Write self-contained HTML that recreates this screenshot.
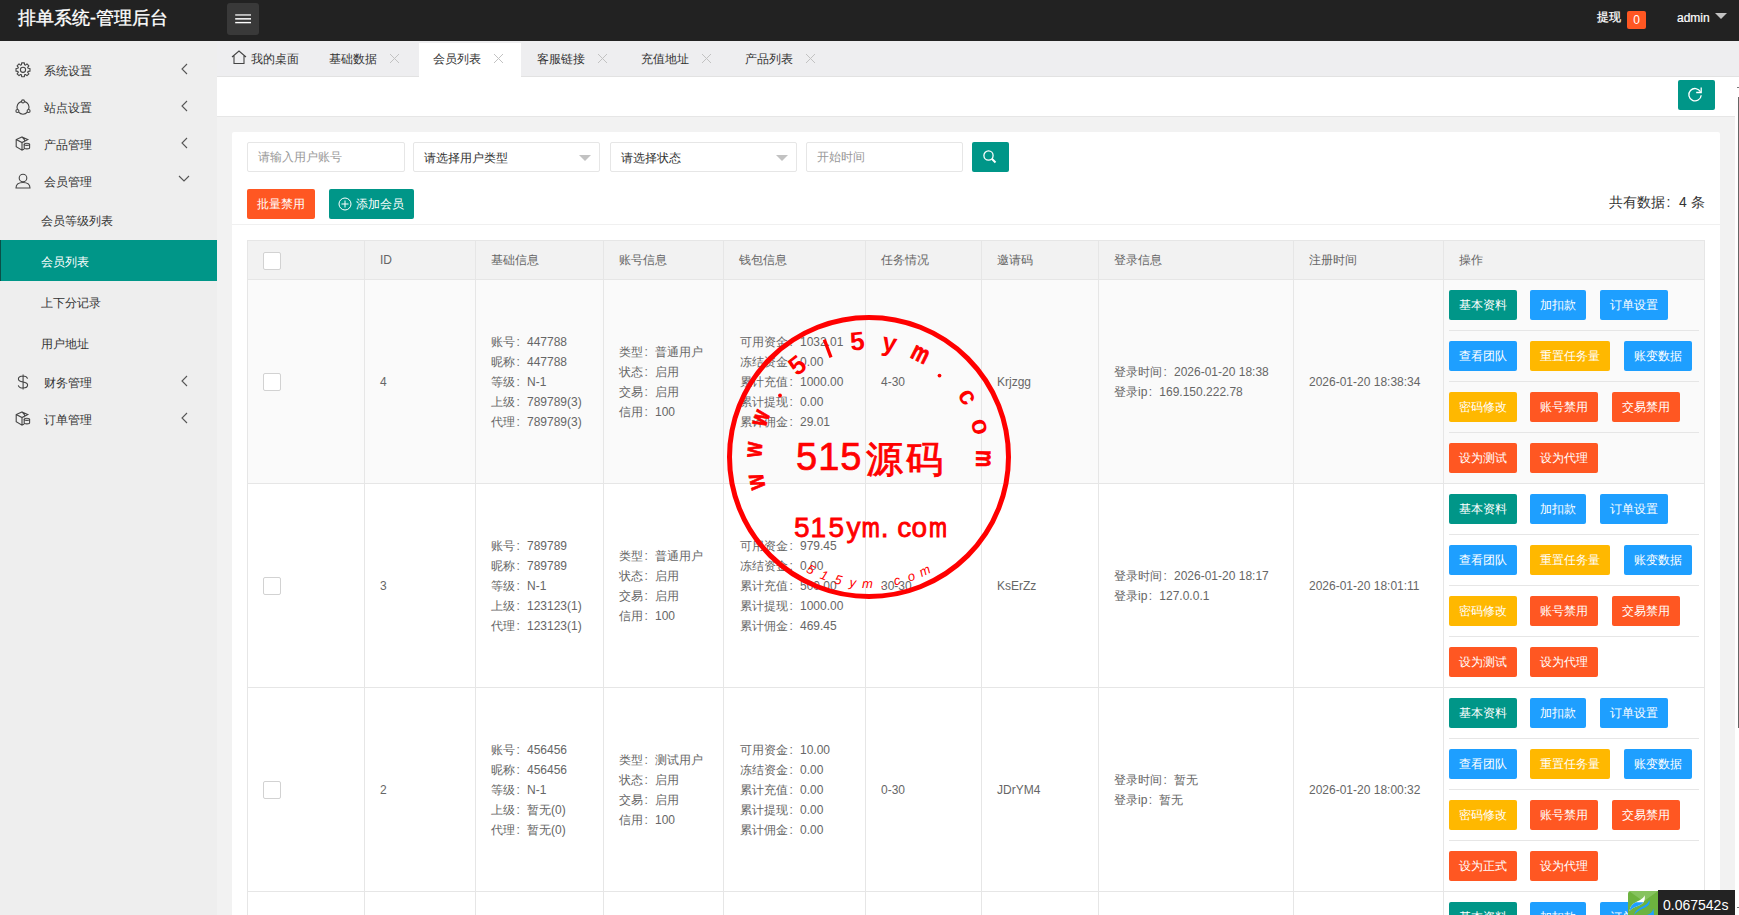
<!DOCTYPE html><html><head><meta charset="utf-8"><style>
i.c{font-style:normal;display:inline-block;width:12px;padding-left:1.5px}
*{box-sizing:border-box;margin:0;padding:0}
html,body{width:1739px;height:915px;overflow:hidden;background:#f2f2f2;font-family:"Liberation Sans",sans-serif;color:#666;font-size:12px}
div,span{position:absolute;white-space:nowrap}
#hdr{left:0;top:0;width:1739px;height:41px;background:#222}
#logo{left:18px;top:6px;font-size:18px;color:#fff;line-height:24px;-webkit-text-stroke:0.35px #fff}
#ham{left:227px;top:3px;width:32px;height:32px;background:#393939;border-radius:3px}
#side{left:0;top:41px;width:217px;height:874px;background:#eee}
.mt{left:44px;color:#333;font-size:12px;line-height:20px}
.st{left:41px;color:#333;font-size:12px;line-height:20px}
#on{left:0;top:240px;width:217px;height:41px;background:#009688;border-left:1px solid #0a4f48}
#tabs{left:217px;top:41px;width:1522px;height:36px;background:#eeeef0;border-bottom:1px solid #e2e2e2}
.tt{top:49px;color:#333;font-size:12px;line-height:20px}
#ontab{left:419px;top:43px;width:102px;height:34px;background:#fff}
#strip{left:217px;top:77px;width:1518px;height:40px;background:#fff;border-bottom:1px solid #e6e6e6}
#card{left:232px;top:132px;width:1488px;height:800px;background:#fff;border-radius:2px}
.inp{top:142px;height:30px;border:1px solid #e6e6e6;border-radius:2px;background:#fff;line-height:28px;padding-left:10px;color:#999;font-size:12px}
.sel{color:#333;line-height:30px}
.tri{top:12px;width:0;height:0;border-left:6px solid transparent;border-right:6px solid transparent;border-top:6px solid #c2c2c2}
.btn{height:30px;line-height:30px;color:#fff;font-size:12px;text-align:center;border-radius:2px}
.g{background:#009688}.b{background:#1E9FFF}.y{background:#FFB800}.r{background:#FF5722}
#total{left:1609px;top:192px;font-size:14px;color:#333;line-height:20px}
#sep1{left:232px;top:224px;width:1488px;height:1px;background:#f0f0f0}
.vl{width:1px;background:#e6e6e6}
.hl{height:1px;background:#e6e6e6}
.th{top:250px;color:#666;font-size:12px;line-height:20px}
.cb{width:18px;height:18px;border:1px solid #d2d2d2;border-radius:2px;background:#fff}
.cell{color:#666;font-size:12px;line-height:20px}
.asep{height:1px;background:#e6e6e6;left:1449px;width:250px}
</style></head><body>
<div id="hdr"></div><div id="logo">排单系统-管理后台</div>
<div id="ham"><svg width="32" height="32" viewBox="0 0 32 32" style="position:absolute;left:0;top:0"><g fill="#fff"><rect x="8.2" y="11.2" width="15.8" height="1.5" fill="#ddd"/><rect x="8.2" y="15.1" width="15.8" height="1.5"/><rect x="8.2" y="18.9" width="15.8" height="1.4"/></g></svg></div>
<div style="left:1597px;top:8px;color:#fff;font-size:12px;line-height:18px;-webkit-text-stroke:0.25px #fff">提现</div>
<div style="left:1627px;top:11px;width:19px;height:18px;background:#FF5722;border-radius:2px;color:#fff;font-size:12px;line-height:18px;text-align:center">0</div>
<div style="left:1677px;top:9px;color:#fff;font-size:12px;line-height:18px;-webkit-text-stroke:0.2px #fff">admin</div>
<div style="left:1715px;top:13px;width:0;height:0;border-left:6px solid transparent;border-right:6px solid transparent;border-top:6px solid #c2c2c2"></div>
<div id="side"></div>
<div id="on"></div>
<div class="mt" style="top:61px">系统设置</div>
<div class="mt" style="top:98px">站点设置</div>
<div class="mt" style="top:135px">产品管理</div>
<div class="mt" style="top:172px">会员管理</div>
<div class="mt" style="top:373px">财务管理</div>
<div class="mt" style="top:410px">订单管理</div>
<div class="st" style="top:211px;color:#333">会员等级列表</div>
<div class="st" style="top:252px;color:#fff">会员列表</div>
<div class="st" style="top:293px;color:#333">上下分记录</div>
<div class="st" style="top:334px;color:#333">用户地址</div>
<svg style="position:absolute;left:180px;top:63px" width="9" height="12" viewBox="0 0 9 12"><path d="M7 1 L2 6 L7 11" fill="none" stroke="#555" stroke-width="1.1"/></svg>
<svg style="position:absolute;left:180px;top:100px" width="9" height="12" viewBox="0 0 9 12"><path d="M7 1 L2 6 L7 11" fill="none" stroke="#555" stroke-width="1.1"/></svg>
<svg style="position:absolute;left:180px;top:137px" width="9" height="12" viewBox="0 0 9 12"><path d="M7 1 L2 6 L7 11" fill="none" stroke="#555" stroke-width="1.1"/></svg>
<svg style="position:absolute;left:180px;top:375px" width="9" height="12" viewBox="0 0 9 12"><path d="M7 1 L2 6 L7 11" fill="none" stroke="#555" stroke-width="1.1"/></svg>
<svg style="position:absolute;left:180px;top:412px" width="9" height="12" viewBox="0 0 9 12"><path d="M7 1 L2 6 L7 11" fill="none" stroke="#555" stroke-width="1.1"/></svg>
<svg style="position:absolute;left:178px;top:174px" width="12" height="9" viewBox="0 0 12 9"><path d="M1 2 L6 7 L11 2" fill="none" stroke="#555" stroke-width="1.1"/></svg>
<svg style="position:absolute;left:15px;top:62px" width="16" height="16" viewBox="0 0 16 16"><path d="M6.45 2.73 L6.65 0.83 L9.35 0.83 L9.55 2.73 L10.49 3.12 L11.97 1.91 L13.89 3.83 L12.68 5.31 L13.07 6.25 L14.97 6.45 L14.97 9.15 L13.07 9.35 L12.68 10.29 L13.89 11.77 L11.97 13.69 L10.49 12.48 L9.55 12.87 L9.35 14.77 L6.65 14.77 L6.45 12.87 L5.51 12.48 L4.03 13.69 L2.11 11.77 L3.32 10.29 L2.93 9.35 L1.03 9.15 L1.03 6.45 L2.93 6.25 L3.32 5.31 L2.11 3.83 L4.03 1.91 L5.51 3.12Z" fill="none" stroke="#444" stroke-width="1.1" stroke-linejoin="round"/><circle cx="8" cy="7.8" r="2.6" fill="none" stroke="#444" stroke-width="1.1"/></svg>
<svg style="position:absolute;left:15px;top:99px" width="16" height="16" viewBox="0 0 16 16"><path d="M6.2 2.6A5.8 5.8 0 0 0 2.4 10.2M9.8 2.6A5.8 5.8 0 0 1 13.6 10.2M3.6 13.2A5.8 5.8 0 0 0 12.4 13.2" fill="none" stroke="#444" stroke-width="1.1"/><circle cx="8" cy="2.4" r="1.5" fill="none" stroke="#444" stroke-width="1.1"/><circle cx="2.4" cy="12" r="1.5" fill="none" stroke="#444" stroke-width="1.1"/><circle cx="13.6" cy="12" r="1.5" fill="none" stroke="#444" stroke-width="1.1"/></svg>
<svg style="position:absolute;left:15px;top:136px" width="16" height="16" viewBox="0 0 16 16"><path d="M9.6 6.2 V4 L7 1 L1.2 3.6 V10.8 L7 14.2 L9.2 13 M1.2 3.6 L7 6.6 L12.8 3.6 L7 1 M7 6.6 V14.2" fill="none" stroke="#444" stroke-width="1.1"/><ellipse cx="11.9" cy="8.3" rx="2.7" ry="1.1" fill="none" stroke="#444" stroke-width="1.1"/><path d="M9.2 8.3 V11.8 A2.7 1.1 0 0 0 14.6 11.8 V8.3" fill="none" stroke="#444" stroke-width="1.1"/></svg>
<svg style="position:absolute;left:15px;top:411px" width="16" height="16" viewBox="0 0 16 16"><path d="M9.6 6.2 V4 L7 1 L1.2 3.6 V10.8 L7 14.2 L9.2 13 M1.2 3.6 L7 6.6 L12.8 3.6 L7 1 M7 6.6 V14.2" fill="none" stroke="#444" stroke-width="1.1"/><ellipse cx="11.9" cy="8.3" rx="2.7" ry="1.1" fill="none" stroke="#444" stroke-width="1.1"/><path d="M9.2 8.3 V11.8 A2.7 1.1 0 0 0 14.6 11.8 V8.3" fill="none" stroke="#444" stroke-width="1.1"/></svg>
<svg style="position:absolute;left:15px;top:173px" width="16" height="16" viewBox="0 0 16 16"><circle cx="8" cy="5" r="3.8" fill="none" stroke="#444" stroke-width="1.1"/><path d="M1 15 C1 10.5 4 9.5 8 9.5 C12 9.5 15 10.5 15 15 Z" fill="none" stroke="#444" stroke-width="1.1"/></svg>
<svg style="position:absolute;left:16px;top:374px" width="14" height="16" viewBox="0 0 14 16"><path d="M11.6 4.6 C11 2.9 9.3 2 7 2 C4.4 2 2.4 3.3 2.4 5.1 C2.4 7 4.5 7.6 7 8 C9.5 8.4 11.6 9 11.6 11 C11.6 12.8 9.6 14 7 14 C4.4 14 2.7 13 2.3 11.3 M7.1 0.5 V15.5" fill="none" stroke="#444" stroke-width="1.1"/></svg>
<div id="tabs"></div><div id="ontab"></div>
<svg style="position:absolute;left:231px;top:50px" width="16" height="15" viewBox="0 0 16 15"><path d="M1 7 L8 1 L15 7 M3 5.5 V13.5 H13 V5.5" fill="none" stroke="#444" stroke-width="1.1"/></svg>
<div class="tt" style="left:251px">我的桌面</div>
<div class="tt" style="left:329px">基础数据</div>
<svg style="position:absolute;left:389px;top:53px" width="11" height="11" viewBox="0 0 11 11"><path d="M1 1 L10 10 M10 1 L1 10" stroke="#c2c2c2" stroke-width="1"/></svg>
<div class="tt" style="left:433px">会员列表</div>
<svg style="position:absolute;left:493px;top:53px" width="11" height="11" viewBox="0 0 11 11"><path d="M1 1 L10 10 M10 1 L1 10" stroke="#c2c2c2" stroke-width="1"/></svg>
<div class="tt" style="left:537px">客服链接</div>
<svg style="position:absolute;left:597px;top:53px" width="11" height="11" viewBox="0 0 11 11"><path d="M1 1 L10 10 M10 1 L1 10" stroke="#c2c2c2" stroke-width="1"/></svg>
<div class="tt" style="left:641px">充值地址</div>
<svg style="position:absolute;left:701px;top:53px" width="11" height="11" viewBox="0 0 11 11"><path d="M1 1 L10 10 M10 1 L1 10" stroke="#c2c2c2" stroke-width="1"/></svg>
<div class="tt" style="left:745px">产品列表</div>
<svg style="position:absolute;left:805px;top:53px" width="11" height="11" viewBox="0 0 11 11"><path d="M1 1 L10 10 M10 1 L1 10" stroke="#c2c2c2" stroke-width="1"/></svg>
<div id="strip"></div>
<div class="btn g" style="left:1678px;top:80px;width:37px"></div>
<svg style="position:absolute;left:1686px;top:85px" width="18" height="18" viewBox="0 0 18 18"><path d="M14.5 6.8 A6.2 6.2 0 1 0 15.2 10.2" fill="none" stroke="#fff" stroke-width="1.3"/><path d="M15.2 2.4 V7.5 H10.2" fill="none" stroke="#fff" stroke-width="1.3"/></svg>
<div style="left:1735px;top:77px;width:4px;height:838px;background:#fff"></div><div style="left:1738px;top:97px;width:1px;height:631px;background:#666"></div><div style="left:1737px;top:907px;width:2px;height:1px;background:#777"></div><div style="left:1737px;top:87px;width:2px;height:1px;background:#777"></div>
<div id="card"></div><div id="sep1"></div>
<div class="inp" style="left:247px;width:158px">请输入用户账号</div>
<div class="inp sel" style="left:413px;width:187px">请选择用户类型<span class="tri" style="left:165px"></span></div>
<div class="inp sel" style="left:610px;width:187px">请选择状态<span class="tri" style="left:165px"></span></div>
<div class="inp" style="left:806px;width:157px">开始时间</div>
<div class="btn g" style="left:972px;top:142px;width:37px"></div>
<svg style="position:absolute;left:980px;top:148px" width="18" height="18" viewBox="0 0 18 18"><circle cx="8.5" cy="7.5" r="4.6" fill="none" stroke="#fff" stroke-width="1.3"/><path d="M11.8 10.8 L15.5 14.5" stroke="#fff" stroke-width="2"/></svg>
<div class="btn r" style="left:247px;top:189px;width:68px">批量禁用</div>
<div class="btn g" style="left:329px;top:189px;width:85px;text-align:left;padding-left:27px">添加会员</div>
<svg style="position:absolute;left:338px;top:197px" width="14" height="14" viewBox="0 0 14 14"><circle cx="7" cy="7" r="6" fill="none" stroke="#fff" stroke-width="1"/><path d="M7 3.5 V10.5 M3.5 7 H10.5" stroke="#fff" stroke-width="1"/></svg>
<div id="total">共有数据<i class="c" style="width:14px">:</i>4 条</div>
<div style="left:247px;top:240px;width:1458px;height:40px;background:#f2f2f2"></div>
<div style="left:247px;top:280px;width:1458px;height:203px;background:#fafafa"></div>
<div class="vl" style="left:247px;top:240px;height:675px"></div>
<div class="vl" style="left:364px;top:240px;height:675px"></div>
<div class="vl" style="left:475px;top:240px;height:675px"></div>
<div class="vl" style="left:603px;top:240px;height:675px"></div>
<div class="vl" style="left:723px;top:240px;height:675px"></div>
<div class="vl" style="left:865px;top:240px;height:675px"></div>
<div class="vl" style="left:981px;top:240px;height:675px"></div>
<div class="vl" style="left:1098px;top:240px;height:675px"></div>
<div class="vl" style="left:1293px;top:240px;height:675px"></div>
<div class="vl" style="left:1443px;top:240px;height:675px"></div>
<div class="vl" style="left:1704px;top:240px;height:675px"></div>
<div class="hl" style="left:247px;top:240px;width:1458px"></div>
<div class="hl" style="left:247px;top:279px;width:1458px"></div>
<div class="hl" style="left:247px;top:483px;width:1458px"></div>
<div class="hl" style="left:247px;top:687px;width:1458px"></div>
<div class="hl" style="left:247px;top:891px;width:1458px"></div>
<div class="th" style="left:380px">ID</div>
<div class="th" style="left:491px">基础信息</div>
<div class="th" style="left:619px">账号信息</div>
<div class="th" style="left:739px">钱包信息</div>
<div class="th" style="left:881px">任务情况</div>
<div class="th" style="left:997px">邀请码</div>
<div class="th" style="left:1114px">登录信息</div>
<div class="th" style="left:1309px">注册时间</div>
<div class="th" style="left:1459px">操作</div>
<div class="cb" style="left:263px;top:252px"></div>
<div class="cb" style="left:263px;top:373px"></div>
<div class="cell" style="left:380px;top:371.5px">4</div>
<div class="cell" style="left:491px;top:331.5px">账号<i class="c">:</i>447788</div>
<div class="cell" style="left:491px;top:351.5px">昵称<i class="c">:</i>447788</div>
<div class="cell" style="left:491px;top:371.5px">等级<i class="c">:</i>N-1</div>
<div class="cell" style="left:491px;top:391.5px">上级<i class="c">:</i>789789(3)</div>
<div class="cell" style="left:491px;top:411.5px">代理<i class="c">:</i>789789(3)</div>
<div class="cell" style="left:619px;top:341.5px">类型<i class="c">:</i>普通用户</div>
<div class="cell" style="left:619px;top:361.5px">状态<i class="c">:</i>启用</div>
<div class="cell" style="left:619px;top:381.5px">交易<i class="c">:</i>启用</div>
<div class="cell" style="left:619px;top:401.5px">信用<i class="c">:</i>100</div>
<div class="cell" style="left:740px;top:331.5px">可用资金<i class="c">:</i>1032.01</div>
<div class="cell" style="left:740px;top:351.5px">冻结资金<i class="c">:</i>0.00</div>
<div class="cell" style="left:740px;top:371.5px">累计充值<i class="c">:</i>1000.00</div>
<div class="cell" style="left:740px;top:391.5px">累计提现<i class="c">:</i>0.00</div>
<div class="cell" style="left:740px;top:411.5px">累计佣金<i class="c">:</i>29.01</div>
<div class="cell" style="left:881px;top:371.5px">4-30</div>
<div class="cell" style="left:997px;top:371.5px">Krjzgg</div>
<div class="cell" style="left:1114px;top:361.5px">登录时间<i class="c">:</i>2026-01-20 18:38</div>
<div class="cell" style="left:1114px;top:381.5px">登录ip<i class="c">:</i>169.150.222.78</div>
<div class="cell" style="left:1309px;top:371.5px">2026-01-20 18:38:34</div>
<div class="btn g" style="left:1449px;top:290px;width:68px">基本资料</div>
<div class="btn b" style="left:1530px;top:290px;width:56px">加扣款</div>
<div class="btn b" style="left:1600px;top:290px;width:68px">订单设置</div>
<div class="asep" style="top:330px"></div>
<div class="btn b" style="left:1449px;top:341px;width:68px">查看团队</div>
<div class="btn y" style="left:1530px;top:341px;width:80px">重置任务量</div>
<div class="btn b" style="left:1624px;top:341px;width:68px">账变数据</div>
<div class="asep" style="top:381px"></div>
<div class="btn y" style="left:1449px;top:392px;width:68px">密码修改</div>
<div class="btn r" style="left:1530px;top:392px;width:68px">账号禁用</div>
<div class="btn r" style="left:1612px;top:392px;width:68px">交易禁用</div>
<div class="asep" style="top:432px"></div>
<div class="btn r" style="left:1449px;top:443px;width:68px">设为测试</div>
<div class="btn r" style="left:1530px;top:443px;width:68px">设为代理</div>
<div class="cb" style="left:263px;top:577px"></div>
<div class="cell" style="left:380px;top:575.5px">3</div>
<div class="cell" style="left:491px;top:535.5px">账号<i class="c">:</i>789789</div>
<div class="cell" style="left:491px;top:555.5px">昵称<i class="c">:</i>789789</div>
<div class="cell" style="left:491px;top:575.5px">等级<i class="c">:</i>N-1</div>
<div class="cell" style="left:491px;top:595.5px">上级<i class="c">:</i>123123(1)</div>
<div class="cell" style="left:491px;top:615.5px">代理<i class="c">:</i>123123(1)</div>
<div class="cell" style="left:619px;top:545.5px">类型<i class="c">:</i>普通用户</div>
<div class="cell" style="left:619px;top:565.5px">状态<i class="c">:</i>启用</div>
<div class="cell" style="left:619px;top:585.5px">交易<i class="c">:</i>启用</div>
<div class="cell" style="left:619px;top:605.5px">信用<i class="c">:</i>100</div>
<div class="cell" style="left:740px;top:535.5px">可用资金<i class="c">:</i>979.45</div>
<div class="cell" style="left:740px;top:555.5px">冻结资金<i class="c">:</i>0.00</div>
<div class="cell" style="left:740px;top:575.5px">累计充值<i class="c">:</i>500.00</div>
<div class="cell" style="left:740px;top:595.5px">累计提现<i class="c">:</i>1000.00</div>
<div class="cell" style="left:740px;top:615.5px">累计佣金<i class="c">:</i>469.45</div>
<div class="cell" style="left:881px;top:575.5px">30-30</div>
<div class="cell" style="left:997px;top:575.5px">KsErZz</div>
<div class="cell" style="left:1114px;top:565.5px">登录时间<i class="c">:</i>2026-01-20 18:17</div>
<div class="cell" style="left:1114px;top:585.5px">登录ip<i class="c">:</i>127.0.0.1</div>
<div class="cell" style="left:1309px;top:575.5px">2026-01-20 18:01:11</div>
<div class="btn g" style="left:1449px;top:494px;width:68px">基本资料</div>
<div class="btn b" style="left:1530px;top:494px;width:56px">加扣款</div>
<div class="btn b" style="left:1600px;top:494px;width:68px">订单设置</div>
<div class="asep" style="top:534px"></div>
<div class="btn b" style="left:1449px;top:545px;width:68px">查看团队</div>
<div class="btn y" style="left:1530px;top:545px;width:80px">重置任务量</div>
<div class="btn b" style="left:1624px;top:545px;width:68px">账变数据</div>
<div class="asep" style="top:585px"></div>
<div class="btn y" style="left:1449px;top:596px;width:68px">密码修改</div>
<div class="btn r" style="left:1530px;top:596px;width:68px">账号禁用</div>
<div class="btn r" style="left:1612px;top:596px;width:68px">交易禁用</div>
<div class="asep" style="top:636px"></div>
<div class="btn r" style="left:1449px;top:647px;width:68px">设为测试</div>
<div class="btn r" style="left:1530px;top:647px;width:68px">设为代理</div>
<div class="cb" style="left:263px;top:781px"></div>
<div class="cell" style="left:380px;top:779.5px">2</div>
<div class="cell" style="left:491px;top:739.5px">账号<i class="c">:</i>456456</div>
<div class="cell" style="left:491px;top:759.5px">昵称<i class="c">:</i>456456</div>
<div class="cell" style="left:491px;top:779.5px">等级<i class="c">:</i>N-1</div>
<div class="cell" style="left:491px;top:799.5px">上级<i class="c">:</i>暂无(0)</div>
<div class="cell" style="left:491px;top:819.5px">代理<i class="c">:</i>暂无(0)</div>
<div class="cell" style="left:619px;top:749.5px">类型<i class="c">:</i>测试用户</div>
<div class="cell" style="left:619px;top:769.5px">状态<i class="c">:</i>启用</div>
<div class="cell" style="left:619px;top:789.5px">交易<i class="c">:</i>启用</div>
<div class="cell" style="left:619px;top:809.5px">信用<i class="c">:</i>100</div>
<div class="cell" style="left:740px;top:739.5px">可用资金<i class="c">:</i>10.00</div>
<div class="cell" style="left:740px;top:759.5px">冻结资金<i class="c">:</i>0.00</div>
<div class="cell" style="left:740px;top:779.5px">累计充值<i class="c">:</i>0.00</div>
<div class="cell" style="left:740px;top:799.5px">累计提现<i class="c">:</i>0.00</div>
<div class="cell" style="left:740px;top:819.5px">累计佣金<i class="c">:</i>0.00</div>
<div class="cell" style="left:881px;top:779.5px">0-30</div>
<div class="cell" style="left:997px;top:779.5px">JDrYM4</div>
<div class="cell" style="left:1114px;top:769.5px">登录时间<i class="c">:</i>暂无</div>
<div class="cell" style="left:1114px;top:789.5px">登录ip<i class="c">:</i>暂无</div>
<div class="cell" style="left:1309px;top:779.5px">2026-01-20 18:00:32</div>
<div class="btn g" style="left:1449px;top:698px;width:68px">基本资料</div>
<div class="btn b" style="left:1530px;top:698px;width:56px">加扣款</div>
<div class="btn b" style="left:1600px;top:698px;width:68px">订单设置</div>
<div class="asep" style="top:738px"></div>
<div class="btn b" style="left:1449px;top:749px;width:68px">查看团队</div>
<div class="btn y" style="left:1530px;top:749px;width:80px">重置任务量</div>
<div class="btn b" style="left:1624px;top:749px;width:68px">账变数据</div>
<div class="asep" style="top:789px"></div>
<div class="btn y" style="left:1449px;top:800px;width:68px">密码修改</div>
<div class="btn r" style="left:1530px;top:800px;width:68px">账号禁用</div>
<div class="btn r" style="left:1612px;top:800px;width:68px">交易禁用</div>
<div class="asep" style="top:840px"></div>
<div class="btn r" style="left:1449px;top:851px;width:68px">设为正式</div>
<div class="btn r" style="left:1530px;top:851px;width:68px">设为代理</div>
<div class="btn g" style="left:1449px;top:902px;width:68px">基本资料</div>
<div class="btn b" style="left:1530px;top:902px;width:56px">加扣款</div>
<div class="btn b" style="left:1600px;top:902px;width:68px">订单设置</div>
<div class="asep" style="top:942px"></div>
<div class="btn b" style="left:1449px;top:953px;width:68px">查看团队</div>
<div class="btn y" style="left:1530px;top:953px;width:80px">重置任务量</div>
<div class="btn b" style="left:1624px;top:953px;width:68px">账变数据</div>
<div class="asep" style="top:993px"></div>
<div class="btn y" style="left:1449px;top:1004px;width:68px">密码修改</div>
<div class="btn r" style="left:1530px;top:1004px;width:68px">账号禁用</div>
<div class="btn r" style="left:1612px;top:1004px;width:68px">交易禁用</div>
<div class="asep" style="top:1044px"></div>
<div class="btn r" style="left:1449px;top:1055px;width:68px">设为测试</div>
<div class="btn r" style="left:1530px;top:1055px;width:68px">设为代理</div>
<svg style="position:absolute;left:0;top:0" width="1739" height="915" viewBox="0 0 1739 915"><g fill="#f00" font-family="Liberation Sans, sans-serif"><circle cx="869" cy="457" r="139.5" fill="none" stroke="#f00" stroke-width="5"/><text x="0" y="0" transform="translate(764.01,480.08) rotate(257.60) scale(0.74,1)" text-anchor="middle" font-size="26" font-weight="bold" stroke="#f00" stroke-width="0.9">w</text><text x="0" y="0" transform="translate(761.72,450.06) rotate(273.70) scale(0.74,1)" text-anchor="middle" font-size="26" font-weight="bold" stroke="#f00" stroke-width="0.9">w</text><text x="0" y="0" transform="translate(767.86,420.59) rotate(289.80) scale(0.74,1)" text-anchor="middle" font-size="26" font-weight="bold" stroke="#f00" stroke-width="0.9">w</text><text x="0" y="0" transform="translate(802.82,372.29) rotate(322.00)" text-anchor="middle" font-size="26" font-weight="bold" stroke="#f00" stroke-width="0">5</text><path d="M824.3 339.6 L831 357.4" stroke="#f00" stroke-width="3.3"/><text x="0" y="0" transform="translate(858.14,350.05) rotate(354.20)" text-anchor="middle" font-size="26" font-weight="bold" stroke="#f00" stroke-width="0">5</text><text x="0" y="0" transform="translate(888.22,351.23) rotate(370.30)" text-anchor="middle" font-size="26" font-weight="bold" stroke="#f00" stroke-width="0">y</text><text x="0" y="0" transform="translate(916.80,360.71) rotate(386.40) scale(0.74,1)" text-anchor="middle" font-size="26" font-weight="bold" stroke="#f00" stroke-width="0.9">m</text><text x="0" y="0" transform="translate(960.76,400.99) rotate(418.60)" text-anchor="middle" font-size="26" font-weight="bold" stroke="#f00" stroke-width="0">c</text><text x="0" y="0" transform="translate(972.69,428.63) rotate(434.70)" text-anchor="middle" font-size="26" font-weight="bold" stroke="#f00" stroke-width="0">o</text><text x="0" y="0" transform="translate(976.49,458.50) rotate(450.80) scale(0.74,1)" text-anchor="middle" font-size="26" font-weight="bold" stroke="#f00" stroke-width="0.9">m</text><circle cx="780" cy="395.5" r="1.9"/><circle cx="939.5" cy="375.6" r="1.9"/><text x="796" y="470" font-size="38" letter-spacing="1" stroke="#f00" stroke-width="0.7">515</text><text x="866" y="472" font-size="37" letter-spacing="3" stroke="#f00" stroke-width="0.9">源码</text><text x="0" y="0" transform="translate(801.9,536.7)" text-anchor="middle" font-size="28" stroke="#f00" stroke-width="0.8">5</text><text x="0" y="0" transform="translate(818.3,536.7)" text-anchor="middle" font-size="28" stroke="#f00" stroke-width="0.8">1</text><text x="0" y="0" transform="translate(836.4,536.7)" text-anchor="middle" font-size="28" stroke="#f00" stroke-width="0.8">5</text><text x="0" y="0" transform="translate(853.5,536.7)" text-anchor="middle" font-size="28" stroke="#f00" stroke-width="0.8">y</text><text x="0" y="0" transform="translate(870.8,536.7) scale(0.77,1)" text-anchor="middle" font-size="28" stroke="#f00" stroke-width="1.2">m</text><text x="0" y="0" transform="translate(884.6,536.7)" text-anchor="middle" font-size="28" stroke="#f00" stroke-width="0.8">.</text><text x="0" y="0" transform="translate(904.2,536.7)" text-anchor="middle" font-size="28" stroke="#f00" stroke-width="0.8">c</text><text x="0" y="0" transform="translate(919.2,536.7)" text-anchor="middle" font-size="28" stroke="#f00" stroke-width="0.8">o</text><text x="0" y="0" transform="translate(937.9,536.7) scale(0.77,1)" text-anchor="middle" font-size="28" stroke="#f00" stroke-width="1.2">m</text><text x="0" y="0" transform="translate(808.71,573.30) rotate(27.40)" text-anchor="middle" font-size="13" font-style="italic">5</text><text x="0" y="0" transform="translate(822.67,579.54) rotate(20.71)" text-anchor="middle" font-size="13" font-style="italic">1</text><text x="0" y="0" transform="translate(837.26,584.10) rotate(14.02)" text-anchor="middle" font-size="13" font-style="italic">5</text><text x="0" y="0" transform="translate(852.29,586.93) rotate(7.33)" text-anchor="middle" font-size="13" font-style="italic">y</text><text x="0" y="0" transform="translate(867.54,587.99) rotate(0.64)" text-anchor="middle" font-size="13" font-style="italic">m</text><text x="0" y="0" transform="translate(882.81,587.27) rotate(-6.05)" text-anchor="middle" font-size="13" font-style="italic">.</text><text x="0" y="0" transform="translate(897.89,584.77) rotate(-12.74)" text-anchor="middle" font-size="13" font-style="italic">c</text><text x="0" y="0" transform="translate(912.58,580.54) rotate(-19.43)" text-anchor="middle" font-size="13" font-style="italic">o</text><text x="0" y="0" transform="translate(926.67,574.62) rotate(-26.12)" text-anchor="middle" font-size="13" font-style="italic">m</text></g></svg>
<svg style="position:absolute;left:1628px;top:891px" width="30" height="24" viewBox="0 0 30 24">
<defs><clipPath id="tp"><path d="M3 0 H30 V24 H0 V3 A3 3 0 0 1 3 0Z"/></clipPath></defs>
<g clip-path="url(#tp)">
<rect x="0" y="0" width="30" height="24" fill="#6db33f"/>
<path d="M1 0 H30 L15.5 10.5 Z" fill="#86c35f"/>
<path d="M16.5 4.2 C15.5 7.5 12 9 9 10.5 C4.5 12.8 2 15.5 1.5 20 C5 16 9.5 15.5 13 13.5 C16.5 11.5 17.5 8 16.5 4.2Z" fill="#fff"/>
<path d="M16.5 4.2 C15.5 7.5 12 9 9 10.5 C4.5 12.8 2 15.5 1.5 20 C5 16 9.5 15.5 13 13.5 C16.5 11.5 17.5 8 16.5 4.2Z" fill="#1E9FFF" clip-path="inset(7px 0 0 0)"/>
<path d="M6 24 C9 20 13 18.5 17 16.5 C21 14.5 22.5 12 21.2 9 C20.5 12 18 13.8 14.5 15.5 C10 17.7 7 20 6 24Z" fill="#1E9FFF"/>
<path d="M25.5 17.5 C25 20 23 22.5 19 24 H26Z" fill="#1E9FFF"/>
</g></svg>
<div style="left:1658px;top:890px;width:77px;height:25px;background:#232323;color:#fff;font-size:14px;line-height:31px;padding-left:5px">0.067542s</div>
</body></html>
